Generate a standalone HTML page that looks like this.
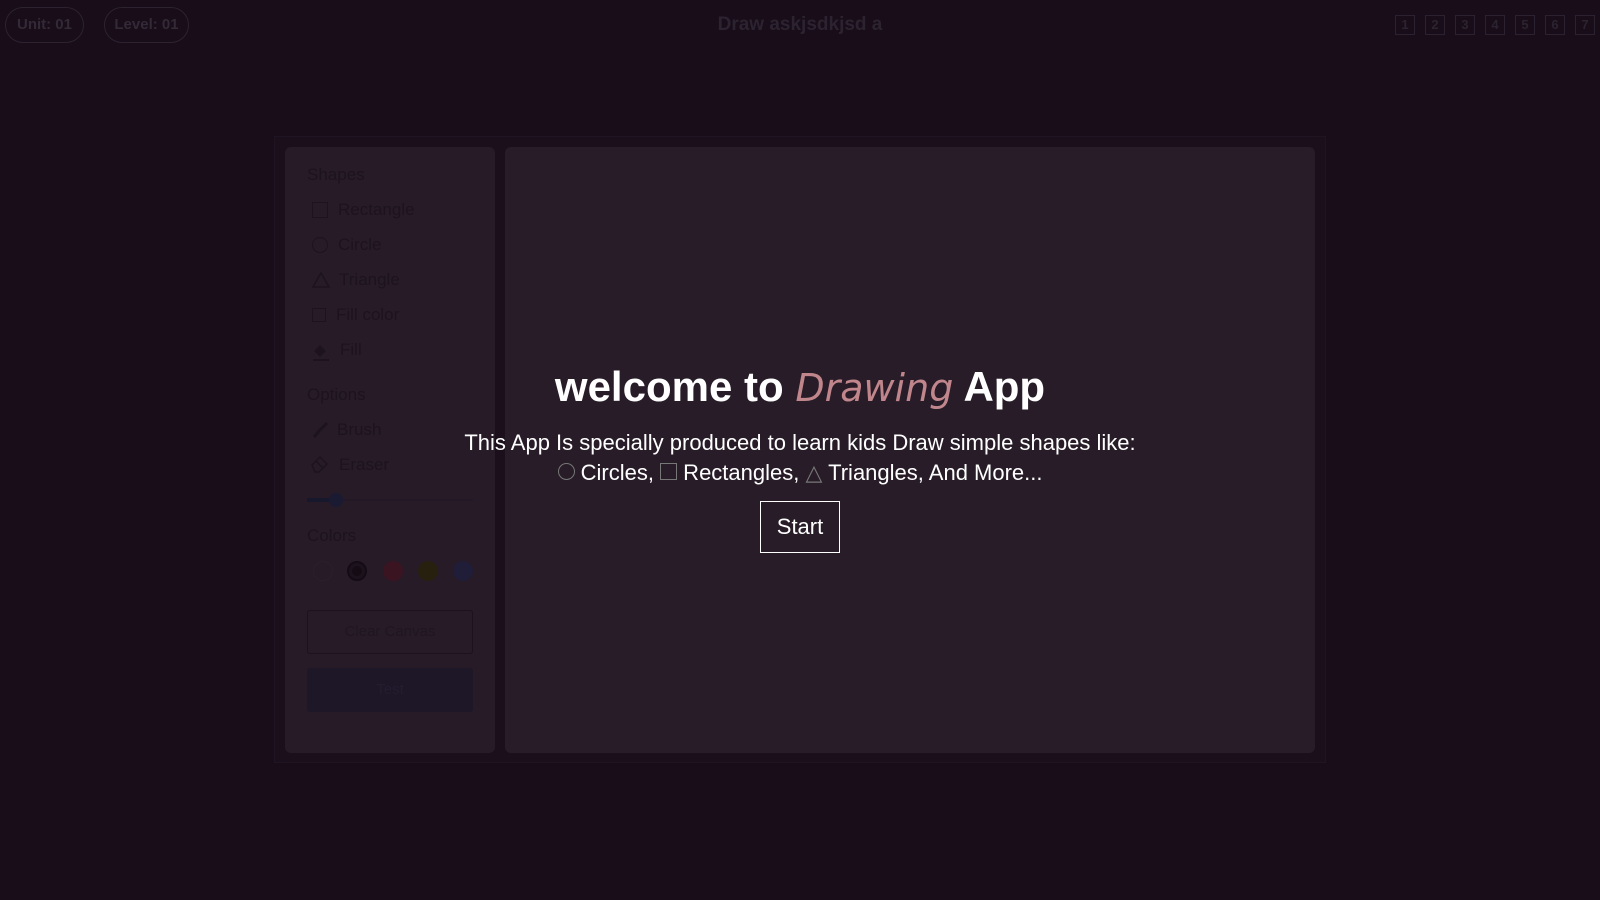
<!DOCTYPE html>
<html><head><style>
*{margin:0;padding:0;box-sizing:border-box}
body{width:1600px;height:900px;background:#180d19;font-family:"Liberation Sans",sans-serif;position:relative;overflow:hidden;color:#2e2431}
.pill{position:absolute;top:7px;height:36px;border:1px solid #2c2330;border-radius:18px;font-weight:bold;font-size:15px;line-height:34px;text-align:center;white-space:nowrap;color:#332a37}
.title{position:absolute;top:14px;left:0;width:1600px;text-align:center;font-weight:bold;font-size:19px;color:#2c2330}
.box{position:absolute;top:15px;width:20px;height:20px;border:1px solid #2a2230;font-size:13px;text-align:center;line-height:18px;color:#2c2330;font-weight:bold}
.outer{position:absolute;left:274px;top:136px;width:1052px;height:627px;border:1px solid #1f1522;background:#1a0f1b}
.side{position:absolute;left:285px;top:147px;width:210px;height:606px;background:#261b27;border-radius:6px}
.canvas{position:absolute;left:505px;top:147px;width:810px;height:606px;background:#271c28;border-radius:6px}
.s{position:absolute;font-size:17px;color:#1d131f}
.h{position:absolute;font-size:17px;color:#1d131f;left:22px}
.dot{position:absolute;top:414px;width:20px;height:20px;border-radius:50%}
.big{position:absolute;left:0;width:1600px;text-align:center;color:#fff;white-space:nowrap}
</style></head><body>
<div class="pill" style="left:5px;width:79px">Unit: 01</div>
<div class="pill" style="left:104px;width:85px">Level: 01</div>
<div class="title">Draw askjsdkjsd a</div>
<div class="box" style="left:1395px">1</div><div class="box" style="left:1425px">2</div><div class="box" style="left:1455px">3</div><div class="box" style="left:1485px">4</div><div class="box" style="left:1515px">5</div><div class="box" style="left:1545px">6</div><div class="box" style="left:1575px">7</div>
<div class="outer"></div>
<div class="side">
<div class="h" style="top:18px">Shapes</div>
<div style="position:absolute;left:27px;top:55px;width:16px;height:16px;border:1.5px solid #1d131f"></div><div class="s" style="left:53px;top:53px">Rectangle</div>
<div style="position:absolute;left:27px;top:90px;width:16px;height:16px;border:1.5px solid #1d131f;border-radius:50%"></div><div class="s" style="left:53px;top:88px">Circle</div>
<svg style="position:absolute;left:26px;top:124px" width="20" height="18"><path d="M10 2 L18 16 L2 16 Z" fill="none" stroke="#1d131f" stroke-width="1.6"/></svg><div class="s" style="left:54px;top:123px">Triangle</div>
<div style="position:absolute;left:27px;top:161px;width:14px;height:14px;border:1px solid #1d131f"></div><div class="s" style="left:51px;top:158px">Fill color</div>
<svg style="position:absolute;left:26px;top:195px" width="20" height="20"><path d="M3 9 L9 3 L15 9 L9 15 Z" fill="#1d131f"/><path d="M2 18 H18" stroke="#1d131f" stroke-width="2"/></svg><div class="s" style="left:55px;top:193px">Fill</div>
<div class="h" style="top:238px">Options</div>
<svg style="position:absolute;left:26px;top:274px" width="18" height="18"><path d="M3 16 L8 10 M8 10 L16 2" stroke="#1d131f" stroke-width="3"/></svg><div class="s" style="left:52px;top:273px">Brush</div>
<svg style="position:absolute;left:25px;top:308px" width="20" height="18"><path d="M2 10 L10 2 L17 9 L9 17 H5 Z M6 6 L13 13" fill="none" stroke="#1d131f" stroke-width="1.5"/></svg><div class="s" style="left:54px;top:308px">Eraser</div>
<div style="position:absolute;left:22px;top:352px;width:166px;height:2px;background:#231825"></div>
<div style="position:absolute;left:22px;top:351px;width:30px;height:4px;background:#18182c"></div>
<div style="position:absolute;left:44px;top:346px;width:14px;height:14px;border-radius:50%;background:#1b1a33"></div>
<div class="h" style="top:379px">Colors</div>
<div class="dot" style="left:28px;border:1px solid #2a1f2c"></div>
<div class="dot" style="left:62px;border:2px solid #140b15;background:#1c121e"><div style="margin:3px;width:10px;height:10px;border-radius:50%;background:#140b15"></div></div>
<div class="dot" style="left:98px;background:#3a1420"></div>
<div class="dot" style="left:133px;background:#27200f"></div>
<div class="dot" style="left:168px;background:#1f1d38"></div>
<div style="position:absolute;left:22px;top:463px;width:166px;height:44px;border:1px solid #1c121e;border-radius:3px;text-align:center;line-height:42px;font-size:15px;color:#201622">Clear Canvas</div>
<div style="position:absolute;left:22px;top:521px;width:166px;height:44px;background:#1d1727;border-radius:3px;text-align:center;line-height:44px;font-size:15px;color:#241d30">Test</div>
</div>
<div class="canvas"></div>
<div class="big" style="top:363px;font-size:42px;font-weight:bold">welcome to <span style="color:#c0868c;font-style:italic;font-weight:normal;font-family:'DejaVu Sans',sans-serif;font-size:38px">Drawing</span> App</div>
<div class="big" style="top:430px;font-size:22px">This App Is specially produced to learn kids Draw simple shapes like:</div>
<div class="big" style="top:460px;font-size:22px"><span style="display:inline-block;width:17px;height:17px;border:1px solid #777;border-radius:50%"></span> Circles, <span style="display:inline-block;width:17px;height:17px;border:1px solid #777"></span> Rectangles, <span style="color:#777">△</span> Triangles, And More...</div>
<div style="position:absolute;left:760px;top:501px;width:80px;height:52px;border:1px solid #fff;color:#fff;font-size:22px;text-align:center;line-height:50px">Start</div>
</body></html>
